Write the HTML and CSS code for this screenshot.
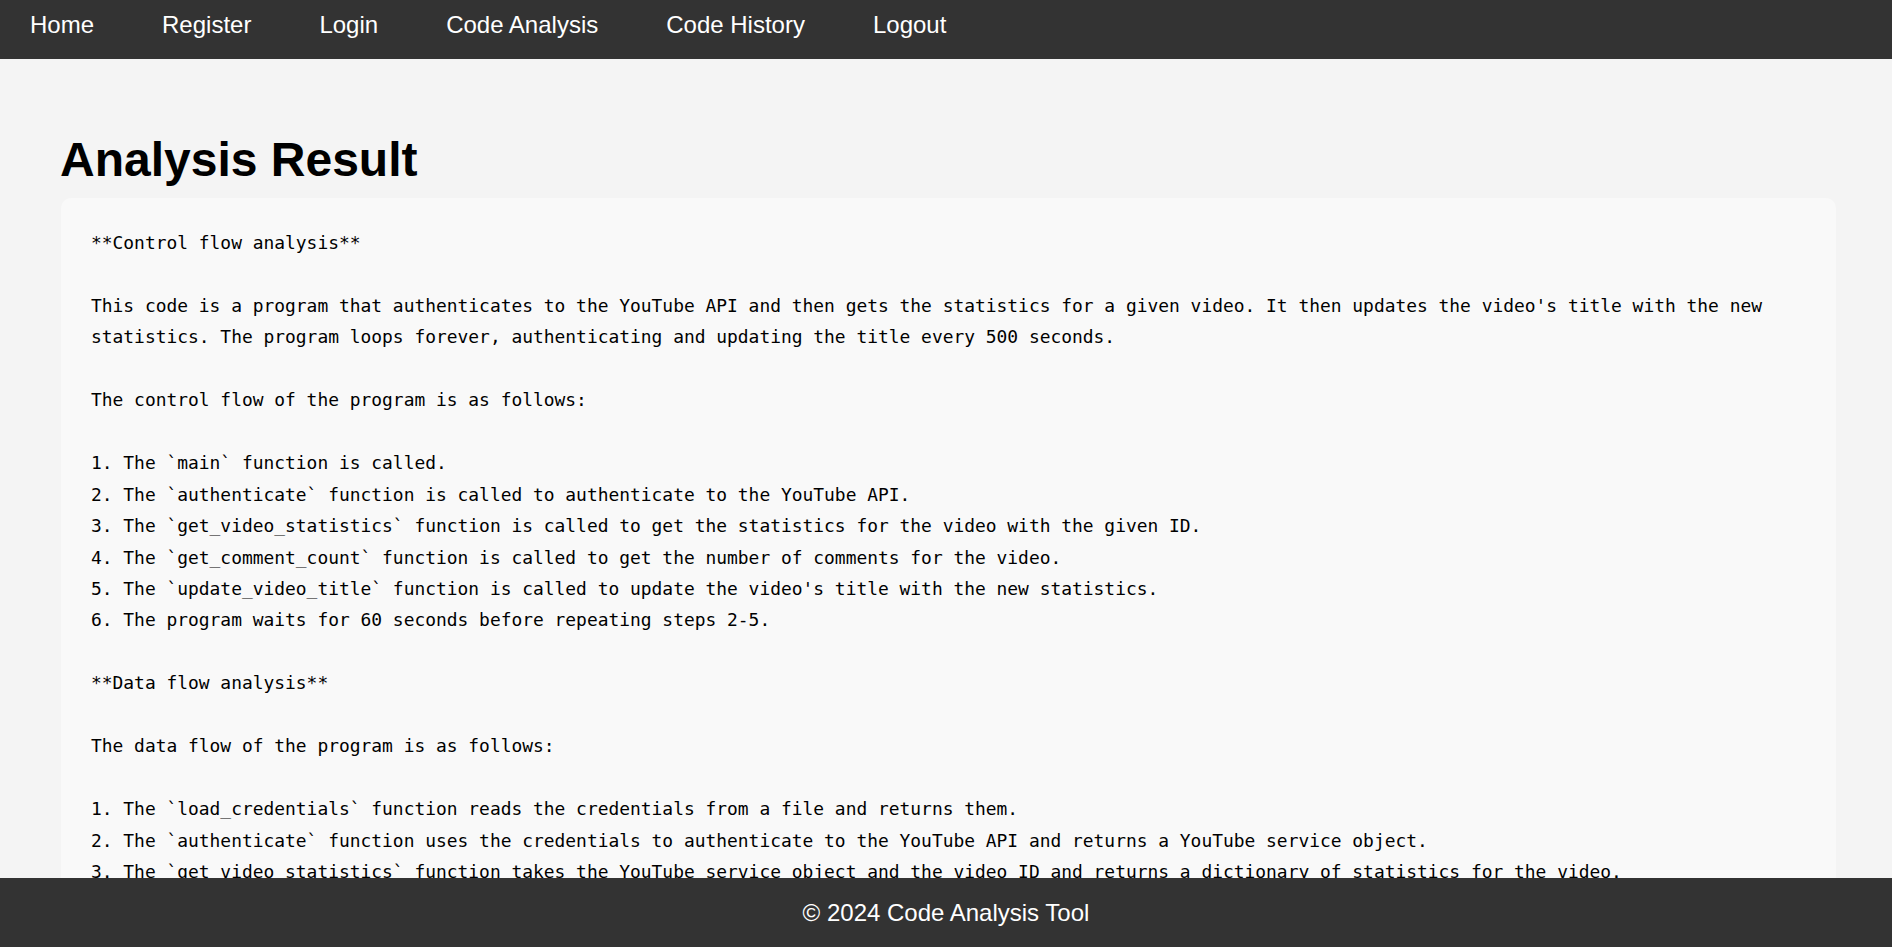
FILE: index.html
```html
<!DOCTYPE html>
<html lang="en">
<head>
<meta charset="utf-8">
<title>Analysis Result</title>
<link rel="stylesheet" href="styles.css">
</head>
<body>
<nav class="topnav">
  <a href="#">Home</a>
  <a href="#">Register</a>
  <a href="#">Login</a>
  <a href="#">Code Analysis</a>
  <a href="#">Code History</a>
  <a href="#">Logout</a>
</nav>
<main class="page">
  <h1 class="title">Analysis Result</h1>
  <pre class="result">**Control flow analysis**

This code is a program that authenticates to the YouTube API and then gets the statistics for a given video. It then updates the video's title with the new statistics. The program loops forever, authenticating and updating the title every 500 seconds.

The control flow of the program is as follows:

1. The `main` function is called.
2. The `authenticate` function is called to authenticate to the YouTube API.
3. The `get_video_statistics` function is called to get the statistics for the video with the given ID.
4. The `get_comment_count` function is called to get the number of comments for the video.
5. The `update_video_title` function is called to update the video's title with the new statistics.
6. The program waits for 60 seconds before repeating steps 2-5.

**Data flow analysis**

The data flow of the program is as follows:

1. The `load_credentials` function reads the credentials from a file and returns them.
2. The `authenticate` function uses the credentials to authenticate to the YouTube API and returns a YouTube service object.
3. The `get_video_statistics` function takes the YouTube service object and the video ID and returns a dictionary of statistics for the video.
4. The `get_comment_count` function takes the YouTube service object and the video ID and returns the number of comments.
5. The `update_video_title` function takes the YouTube service object, the video ID and the statistics and updates the title.</pre>
</main>
<footer class="footer">© 2024 Code Analysis Tool</footer>
</body>
</html>
```
FILE: styles.css
```css
html, body {
  margin: 0;
  padding: 0;
}
body {
  background: #f4f4f4;
  font-family: "Liberation Sans", Arial, sans-serif;
  color: #000;
}
.topnav {
  background: #333333;
  height: 59px;
  box-sizing: border-box;
  padding: 10px 30px 0 30px;
  display: flex;
  align-items: flex-start;
  gap: 68px;
}
.topnav a {
  color: #ffffff;
  text-decoration: none;
  font-size: 24px;
  line-height: 29px;
}
.page {
  padding: 73px 56px 120px 61px;
}
.title {
  margin: 0 0 11px -1px;
  font-size: 48px;
  font-weight: bold;
  line-height: 55px;
}
.result {
  margin: 0;
  background: #f9f9f9;
  border-radius: 10px;
  padding: 29px 29px 29px 30px;
  font-family: "DejaVu Sans Mono", "Liberation Mono", monospace;
  font-size: 17.92px;
  line-height: 31.45px;
  white-space: pre-wrap;
  word-wrap: break-word;
  color: #000;
}
.footer {
  position: fixed;
  left: 0;
  right: 0;
  bottom: 0;
  height: 69px;
  background: #333333;
  color: #ffffff;
  font-size: 24px;
  display: flex;
  align-items: center;
  justify-content: center;
}
```
